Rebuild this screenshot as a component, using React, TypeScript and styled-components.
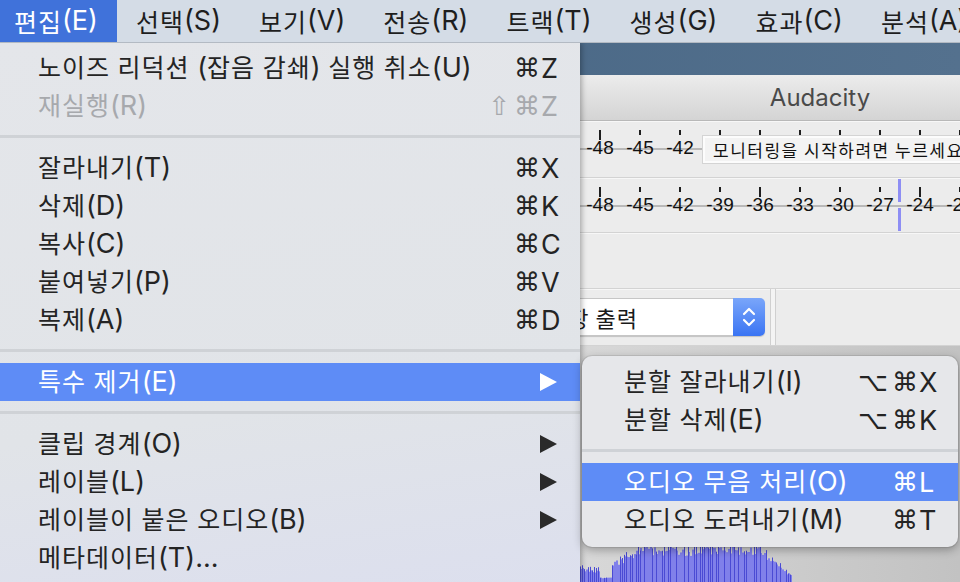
import React from "react";
import styled, { createGlobalStyle, css } from "styled-components";

const UI_FONT = `Inter, "Noto Sans CJK KR", sans-serif`;
const KR_FONT = `"Noto Sans CJK KR", sans-serif`;
const SYMBOL_FONT = `"DejaVu Sans", "Noto Sans CJK KR", sans-serif`;
const METER_FONT = `"Liberation Sans", Arial, sans-serif`;

const GlobalStyle = createGlobalStyle`
  html, body {
    margin: 0;
    padding: 0;
    width: 960px;
    height: 582px;
    overflow: hidden;
    background: #e3e6ea;
  }
  body {
    font-family: ${UI_FONT};
    -webkit-font-smoothing: antialiased;
  }
`;

const Screen = styled.div`
  width: 960px;
  height: 582px;
  display: flex;
  flex-direction: column;
  overflow: hidden;
`;

/* ---------- Mixed Korean / Latin text ---------- */

const Hangul = styled.span`
  font-family: ${KR_FONT};
  font-size: 25px;
  letter-spacing: 1px;
`;

const Latin = styled.span`
  font-family: Inter, sans-serif;
  font-size: 27px;
`;

function MixedText({ text }: { text: string }) {
  const parts = text.split(/([가-힣ㄱ-ㅎㅏ-ㅣ]+)/).filter((p) => p.length > 0);
  return (
    <>
      {parts.map((p, i) =>
        /[가-힣ㄱ-ㅎㅏ-ㅣ]/.test(p) ? <Hangul key={i}>{p}</Hangul> : <Latin key={i}>{p}</Latin>
      )}
    </>
  );
}

/* ---------- Menu bar ---------- */

const MenuBar = styled.nav`
  flex: none;
  height: 42px;
  display: flex;
  align-items: stretch;
  background: #d4dce6;
  border-bottom: 1px solid #b3bac3;
  line-height: 42px;
  color: #1e1e1e;
  position: relative;
  z-index: 20;
`;

const MenuBarItem = styled.div<{ $active?: boolean; $first?: boolean }>`
  display: flex;
  align-items: center;
  padding: 0 19px 0 ${(p) => (p.$first ? 14 : 19)}px;
  white-space: nowrap;
  ${(p) =>
    p.$active &&
    css`
      background: #4072da;
      color: #ffffff;
    `}
`;

/* ---------- Stage: background app + menus overlay ---------- */

const Stage = styled.div`
  flex: 1;
  position: relative;
  overflow: hidden;
`;

const Desktop = styled.div`
  height: 100%;
  display: flex;
  flex-direction: column;
`;

const DesktopStrip = styled.div`
  flex: none;
  height: 32px;
  background: linear-gradient(90deg, #3f5a77 0%, #4a6886 45%, #54718e 100%);
`;

const AppWindow = styled.div`
  flex: 1;
  display: flex;
  flex-direction: column;
  background: #ececec;
  min-height: 0;
`;

const TitleBar = styled.div`
  flex: none;
  height: 45px;
  display: flex;
  align-items: center;
  justify-content: center;
  padding-left: 680px;
  background: linear-gradient(#ececec, #d4d4d4);
  border-bottom: 1px solid #b8b8b8;
  font: 24px ${UI_FONT};
  color: #4a4a4a;
`;

const ToolRow = styled.div<{ $h: number }>`
  flex: none;
  position: relative;
  height: ${(p) => p.$h}px;
  border-bottom: 1px solid #d3d3d3;
  box-shadow: inset 0 1px 0 #f7f7f7;
  display: flex;
  align-items: stretch;
`;

const Ruler = styled.div`
  display: flex;
  padding-left: 420px;
  background: linear-gradient(#b9b9b9, #b9b9b9) no-repeat 0 27px / 100% 2px;
  width: 100%;
`;

const RulerCell = styled.div`
  flex: none;
  width: 40px;
  display: flex;
  flex-direction: column;
  align-items: center;
  padding-top: 9px;
`;

const TickSlot = styled.div`
  height: 8px;
  display: flex;
  justify-content: center;
  align-items: flex-start;
  overflow: visible;
`;

const Tick = styled.div<{ $tall?: boolean }>`
  flex: none;
  width: 2px;
  height: ${(p) => (p.$tall ? 10 : 5)}px;
  background: #1e1e1e;
`;

const RulerLabel = styled.div`
  font: 19px/19px ${METER_FONT};
  color: #111;
  white-space: nowrap;
`;

const HintBox = styled.div`
  position: absolute;
  left: 703px;
  top: 15px;
  right: -40px;
  height: 27px;
  box-sizing: border-box;
  background: #f3f3f3;
  border: 2px solid #fcfcfc;
  outline: 1px solid #d4d4d4;
  padding-left: 8px;
  font: 17px/23px ${KR_FONT};
  letter-spacing: 1.5px;
  color: #111;
  white-space: nowrap;
  overflow: hidden;
`;

const PeakMarker = styled.div`
  position: absolute;
  left: 898px;
  top: 1px;
  width: 3px;
  height: 52px;
  background: linear-gradient(
    #8e8ef4 0,
    #8e8ef4 23px,
    transparent 23px,
    transparent 29px,
    #8e8ef4 29px
  );
`;

const DeviceBar = styled.div`
  display: flex;
  align-items: center;
  padding-left: 534px;
  width: 100%;
`;

const Select = styled.div`
  flex: none;
  width: 231px;
  height: 38px;
  display: flex;
  box-shadow: 0 1px 1px rgba(0, 0, 0, 0.18);
  border-radius: 5px;
`;

const SelectText = styled.div`
  flex: 1;
  background: #ffffff;
  border: 1px solid #c6c6c6;
  border-right: none;
  border-radius: 5px 0 0 5px;
  padding-left: 12px;
  font: 22px/36px ${KR_FONT};
  letter-spacing: 1px;
  color: #1a1a1a;
  white-space: nowrap;
`;

const Stepper = styled.div`
  flex: none;
  width: 32px;
  border-radius: 0 5px 5px 0;
  background: linear-gradient(#7aa6fa, #3a74f3);
  display: flex;
  align-items: center;
  justify-content: center;
`;

const RowDivider = styled.div`
  flex: none;
  align-self: stretch;
  width: 4px;
  margin-left: 5px;
  border-left: 1px solid #d0d0d0;
  border-right: 1px solid #d0d0d0;
  background: #f4f4f4;
`;

const TrackArea = styled.div`
  flex: 1;
  display: flex;
  align-items: flex-end;
  background: linear-gradient(90deg, #e0e0e0 0%, #d8d8d8 60%, #c2c2c2 100%);
  min-height: 0;
`;

const Wave = styled.svg`
  display: block;
  margin-left: 400px;
  flex: none;
`;

/* ---------- Menus ---------- */

const MenuPanel = styled.div`
  color: #242424;
  z-index: 10;
`;

const MainMenu = styled(MenuPanel)`
  position: absolute;
  left: 0;
  top: 0;
  width: 580px;
  padding: 6px 0;
  background: linear-gradient(172deg, #e4e6ea 0%, #e1e4e8 65%, #dcdfee 100%);
  box-shadow: 2px 0 5px rgba(0, 0, 0, 0.28);
`;

const SubMenu = styled(MenuPanel)`
  position: absolute;
  left: 582px;
  top: 313px;
  width: 376px;
  padding: 7px 0 8px;
  border-radius: 10px;
  background: #e6e7ea;
  box-shadow: 0 3px 10px rgba(0, 0, 0, 0.3), 0 0 0 1px rgba(0, 0, 0, 0.08);
`;

const Row = styled.div<{ $active?: boolean; $disabled?: boolean; $indent: number }>`
  height: 38px;
  display: flex;
  align-items: center;
  padding: 0 17px 0 ${(p) => p.$indent}px;
  white-space: nowrap;
  ${(p) =>
    p.$disabled &&
    css`
      color: #a7a9ad;
    `}
  ${(p) =>
    p.$active &&
    css`
      background: #5e8cf6;
      color: #ffffff;
    `}
`;

const RowLabel = styled.span`
  flex: 1;
  line-height: 38px;
`;

const Shortcut = styled.span`
  display: flex;
  align-items: center;
  line-height: 38px;
`;

const Mods = styled.span`
  font: 26px ${SYMBOL_FONT};
  letter-spacing: 4px;
  margin-right: -3px;
`;

const KeyCap = styled.span`
  width: 22px;
  text-align: left;
  font: 27px Inter, sans-serif;
`;

const Arrow = styled.svg`
  display: block;
  margin-right: 6px;
`;

const Separator = styled.div`
  height: 24px;
  display: flex;
  flex-direction: column;
  padding-top: 10px;
  box-sizing: border-box;
  &::before {
    content: "";
    height: 3px;
    background: #cfd2d6;
  }
`;

/* ---------- Data ---------- */

type Entry =
  | {
      kind: "item";
      label: string;
      mods?: string;
      keyName?: string;
      disabled?: boolean;
      active?: boolean;
      submenu?: boolean;
    }
  | { kind: "sep" };

const item = (label: string, mods?: string, keyName?: string, extra: Record<string, boolean> = {}): Entry => ({
  kind: "item",
  label,
  mods,
  keyName,
  ...extra,
});
const sep: Entry = { kind: "sep" };

const editMenu: Entry[] = [
  item("노이즈 리덕션 (잡음 감쇄) 실행 취소(U)", "⌘", "Z"),
  item("재실행(R)", "⇧⌘", "Z", { disabled: true }),
  sep,
  item("잘라내기(T)", "⌘", "X"),
  item("삭제(D)", "⌘", "K"),
  item("복사(C)", "⌘", "C"),
  item("붙여넣기(P)", "⌘", "V"),
  item("복제(A)", "⌘", "D"),
  sep,
  item("특수 제거(E)", undefined, undefined, { active: true, submenu: true }),
  sep,
  item("클립 경계(O)", undefined, undefined, { submenu: true }),
  item("레이블(L)", undefined, undefined, { submenu: true }),
  item("레이블이 붙은 오디오(B)", undefined, undefined, { submenu: true }),
  item("메타데이터(T)..."),
];

const removeSpecialMenu: Entry[] = [
  item("분할 잘라내기(I)", "⌥⌘", "X"),
  item("분할 삭제(E)", "⌥⌘", "K"),
  sep,
  item("오디오 무음 처리(O)", "⌘", "L", { active: true }),
  item("오디오 도려내기(M)", "⌘", "T"),
];

const menuBarItems = ["편집(E)", "선택(S)", "보기(V)", "전송(R)", "트랙(T)", "생성(G)", "효과(C)", "분석(A)"];

const rulerValues = Array.from({ length: 14 }, (_, k) => -60 + 3 * k);

/* ---------- Pieces ---------- */

function SubArrow({ light }: { light?: boolean }) {
  return (
    <Arrow width="17" height="18" viewBox="0 0 17 18">
      <polygon points="0,0 17,9 0,18" fill={light ? "#ffffff" : "#2a2a2a"} />
    </Arrow>
  );
}

function MenuList({ entries, indent }: { entries: Entry[]; indent: number }) {
  return (
    <>
      {entries.map((e, i) =>
        e.kind === "sep" ? (
          <Separator key={i} />
        ) : (
          <Row key={i} $active={e.active} $disabled={e.disabled} $indent={indent}>
            <RowLabel>
              <MixedText text={e.label} />
            </RowLabel>
            {e.submenu && <SubArrow light={e.active} />}
            {e.keyName && (
              <Shortcut>
                <Mods>{e.mods}</Mods>
                <KeyCap>{e.keyName}</KeyCap>
              </Shortcut>
            )}
          </Row>
        )
      )}
    </>
  );
}

function MeterRuler() {
  return (
    <Ruler>
      {rulerValues.map((v) => (
        <RulerCell key={v}>
          <TickSlot>
            <Tick $tall={v % 12 === 0} />
          </TickSlot>
          <RulerLabel>{v}</RulerLabel>
        </RulerCell>
      ))}
    </Ruler>
  );
}

function seeded(seed: number) {
  let s = seed;
  return () => {
    s = (s * 16807) % 2147483647;
    return (s - 1) / 2147483646;
  };
}

function envelope(abs: number): number {
  if (abs < 583) return 16;
  if (abs < 600) return 14;
  if (abs < 612) return 5;
  if (abs < 640) return 22 + ((abs - 612) / 28) * 16;
  if (abs < 760) return 40;
  if (abs < 792) return 36 - ((abs - 760) / 32) * 30;
  return 0;
}

function Waveform() {
  const rnd = seeded(7);
  const bars: React.ReactNode[] = [];
  for (let x = 0; x < 392; x += 2) {
    const abs = 400 + x;
    const env = envelope(abs);
    if (env <= 0) continue;
    const body = env * (0.65 + 0.25 * rnd());
    const peak = env * (0.75 + 0.35 * rnd());
    bars.push(<rect key={`b${x}`} x={x} y={40 - body} width={2} height={body} fill="#8080ea" />);
    if (rnd() > 0.45) {
      bars.push(<rect key={`p${x}`} x={x} y={40 - peak} width={1} height={peak} fill="#4a4ad4" />);
    }
  }
  return (
    <Wave width="392" height="40" viewBox="0 0 392 40">
      {bars}
    </Wave>
  );
}

function Chevrons() {
  return (
    <svg width="14" height="24" viewBox="0 0 14 24">
      <polyline points="2,9 7,4 12,9" fill="none" stroke="#fff" strokeWidth="2.2" strokeLinecap="round" strokeLinejoin="round" />
      <polyline points="2,15 7,20 12,15" fill="none" stroke="#fff" strokeWidth="2.2" strokeLinecap="round" strokeLinejoin="round" />
    </svg>
  );
}

export default function App() {
  return (
    <>
      <GlobalStyle />
      <Screen>
        <MenuBar>
          {menuBarItems.map((m, i) => (
            <MenuBarItem key={m} $active={i === 0} $first={i === 0}>
              <MixedText text={m} />
            </MenuBarItem>
          ))}
        </MenuBar>
        <Stage>
          <Desktop>
            <DesktopStrip />
            <AppWindow>
              <TitleBar>Audacity</TitleBar>
              <ToolRow $h={56}>
                <MeterRuler />
                <HintBox>모니터링을 시작하려면 누르세요</HintBox>
              </ToolRow>
              <ToolRow $h={54}>
                <MeterRuler />
                <PeakMarker />
              </ToolRow>
              <ToolRow $h={55} />
              <ToolRow $h={56}>
                <DeviceBar>
                  <Select>
                    <SelectText>내장 출력</SelectText>
                    <Stepper>
                      <Chevrons />
                    </Stepper>
                  </Select>
                  <RowDivider />
                </DeviceBar>
              </ToolRow>
              <TrackArea>
                <Waveform />
              </TrackArea>
            </AppWindow>
          </Desktop>

          <MainMenu>
            <MenuList entries={editMenu} indent={38} />
          </MainMenu>
          <SubMenu>
            <MenuList entries={removeSpecialMenu} indent={42} />
          </SubMenu>
        </Stage>
      </Screen>
    </>
  );
}
